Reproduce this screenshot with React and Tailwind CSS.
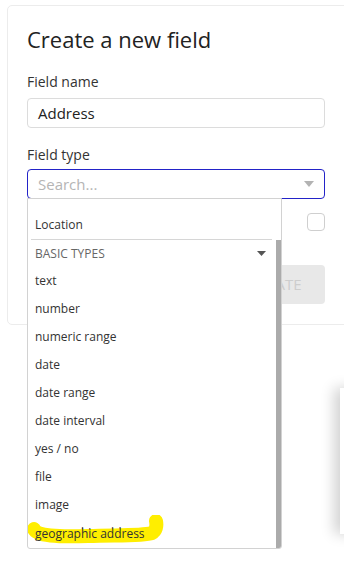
const ITEMS = [
  'text',
  'number',
  'numeric range',
  'date',
  'date range',
  'date interval',
  'yes / no',
  'file',
  'image',
  'geographic address',
]

export default function App() {
  return (
    <div className="relative w-[344px] h-[561px] overflow-hidden bg-white font-['Open_Sans',sans-serif]">
      {/* card */}
      <div className="ml-[7px] mt-[5px] w-[380px] rounded-[5px] border border-[#ececec] pl-[19px] pr-[61px] pt-[18px] pb-[20px]">
        <h1 className="text-[22px] leading-[30px] text-[#222]">Create a new field</h1>

        <div className="mt-[18px] text-[14px] leading-[20px] text-[#333]">Field name</div>
        <div className="mt-[6px] h-[30px] rounded-[4px] border border-[#dcdcdc] px-[10px] text-[15px] leading-[28px] text-[#222]">
          Address
        </div>

        <div className="mt-[17px] text-[14px] leading-[20px] text-[#333]">Field type</div>
        <div className="mt-[4px] flex h-[30px] items-center justify-between rounded-[4px] border border-[#2323c8] px-[10px] text-[15px] text-[#b5b5b5]">
          <span>Search...</span>
          <svg width="10" height="6" viewBox="0 0 10 6">
            <path d="M0 0h10L5 6z" fill="#b3b3b3" />
          </svg>
        </div>

        <div className="mt-[14px] flex justify-end">
          <div className="h-[18px] w-[18px] rounded-[4px] border border-[#cfcfcf]" />
        </div>

        <div className="mt-[34px] flex justify-end">
          <div className="flex h-[39px] w-[100px] items-center justify-center rounded-[4px] bg-[#e8e8e8] text-[15px] text-[#cdcdcd]">
            CREATE
          </div>
        </div>
      </div>

      {/* dropdown */}
      <div className="absolute left-[27px] top-[198px] h-[351px] w-[255px] overflow-hidden rounded-b-[3px] border border-[#d2d2d2] bg-white">
        <div className="-mt-[16px] pr-[6px]">
          <div className="flex h-[28px] items-start px-[7px] text-[12px] leading-[20px] text-[#333]">User</div>
          <div className="flex h-[28px] items-center px-[7px] text-[12px] text-[#333]">Location</div>
          <div className="mx-[3px] border-t border-[#d6d6d6]" />
          <div className="flex h-[27px] items-center justify-between px-[7px] pr-[9px] text-[12px] text-[#666]">
            <span>BASIC TYPES</span>
            <svg width="9" height="5" viewBox="0 0 9 5">
              <path d="M0 0h9L4.5 5z" fill="#555" />
            </svg>
          </div>
          {ITEMS.map((it) => (
            <div key={it} className="flex h-[28px] items-center px-[7px] text-[12px] text-[#333]">
              {it}
            </div>
          ))}
        </div>
        <div className="absolute right-0 top-[41px] bottom-0 w-[5px] bg-[#ababab]" />
      </div>

      {/* marker highlight */}
      <svg className="absolute left-[28px] top-[515px]" width="140" height="34" viewBox="0 0 140 34">
        <path
          d="M6 14 C 8 21, 30 22, 60 21 C 90 20, 115 21, 124 18 C 128 16, 129 11, 128 6"
          stroke="#ffee00"
          strokeWidth="14"
          strokeLinecap="round"
          fill="none"
        />
      </svg>
      <div className="absolute left-[35px] top-[520px] text-[12px] leading-[28px] text-[#333]">geographic address</div>

      {/* right side panel */}
      <div className="absolute left-[340px] top-[388px] h-[146px] w-[30px] bg-white shadow-[-6px_0_14px_rgba(0,0,0,0.18)]" />
    </div>
  )
}
